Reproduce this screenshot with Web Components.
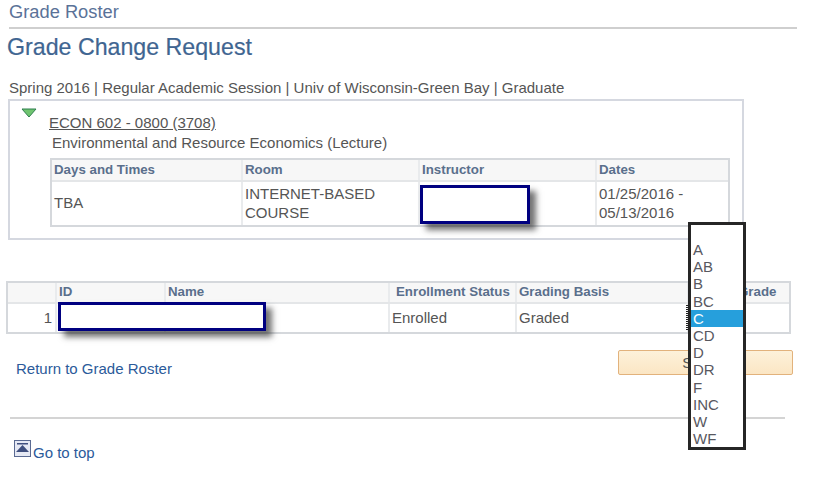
<template id="grade-grid">
    <style>
        :host {
            display: block;
            position: relative;
            border: 2px solid #d5d8dc;
            box-sizing: border-box;
            background: #fff;
            color: #555;
        }

        .row {
            display: grid;
            grid-template-columns: var(--cols);
        }

        .head {
            height: var(--head-h, 20px);
            background: #f7f7f7;
            border-bottom: 2px solid #e4e6e8;
            color: #5a6f8c;
            font-weight: bold;
            font-size: 13.3px;
        }

        .body {
            height: var(--body-h, 43px);
            font-size: 15px;
            line-height: 19px;
        }

        ::slotted(span) {
            display: flex;
            align-items: center;
            padding: 0 0 2px 2px;
            border-left: 2px solid #e9ebed;
            white-space: pre-line;
            box-sizing: border-box;
            overflow: hidden;
        }

        ::slotted(.lead) {
            border-left: 0;
        }
    </style>
    <div class="row head"><slot name="head"></slot></div>
    <div class="row body"><slot name="body"></slot></div>
    <slot name="over"></slot>
</template>

<template id="redact-box">
    <style>
        :host {
            display: block;
            position: absolute;
            box-sizing: border-box;
            background: #fff;
            border: 3px solid #000080;
            box-shadow: 6px 6px 6px rgba(40, 40, 40, 0.65);
        }
    </style>
</template>

<template id="grade-menu">
    <style>
        :host {
            display: block;
            position: absolute;
            left: 688px;
            top: 222px;
            width: 58px;
            height: 228px;
            box-sizing: border-box;
            border: 3px solid #262626;
            background: #fff;
            padding-top: 16px;
            color: #58585f;
            font-size: 15px;
            z-index: 5;
        }

        :host::before {
            content: "";
            position: absolute;
            left: -5px;
            top: 80px;
            width: 2px;
            height: 25px;
            background: repeating-linear-gradient(#222 0 1px, transparent 1px 2px);
        }

        ::slotted(div) {
            height: 17.2px;
            line-height: 17.2px;
            padding-left: 2px;
        }

        ::slotted(.on) {
            background: #269fdc;
            color: #fff;
        }
    </style>
    <slot></slot>
</template>

<template id="top-icon">
    <style>
        :host {
            display: inline-block;
            width: 18px;
            height: 18px;
        }

        svg {
            display: block;
        }
    </style>
    <svg width="18" height="18" viewBox="0 0 18 18">
        <rect x="0.5" y="0.5" width="16" height="16" fill="#e6e9f4" stroke="#5a6a92"></rect>
        <rect x="3" y="3" width="11" height="1.5" fill="#3f4f7f"></rect>
        <path d="M8.5 5 L15 12 H2 Z" fill="#3f4f7f"></path>
    </svg>
</template>

<template id="grade-page">
    <style>
        :host {
            display: block;
            position: relative;
            width: 819px;
            height: 496px;
            overflow: hidden;
            background: #fff;
            font-family: "Liberation Sans", Arial, sans-serif;
            color: #555;
        }

        .crumb {
            margin-left: 9px;
            padding-top: 3px;
            height: 29px;
            width: 788px;
            box-sizing: border-box;
            border-bottom: 2px solid #cfcfcf;
            color: #5a7298;
            font-size: 18.3px;
            line-height: 18px;
        }

        h1 {
            margin: 4px 0 0 7px;
            height: 28px;
            font-size: 23.2px;
            line-height: 28px;
            font-weight: normal;
            color: #3f6591;
            -webkit-text-stroke: 0.2px #3f6591;
        }

        .term {
            margin: 19px 0 0 9px;
            font-size: 15px;
            line-height: 16px;
            height: 16px;
        }

        .panel {
            margin: 3px 0 0 8px;
            width: 736px;
            height: 141px;
            box-sizing: border-box;
            border: 2px solid #d5d8e0;
            position: relative;
            padding: 7px 0 0 11px;
            display: flex;
            gap: 12px;
        }

        .arrow {
            flex: none;
        }

        .info {
            flex: 1;
            padding-top: 6px;
        }

        .course {
            font-size: 15px;
            line-height: 18px;
            text-decoration: underline;
        }

        .title {
            margin: 2px 0 6px 3px;
            font-size: 15px;
            line-height: 18px;
        }

        .meeting {
            --cols: 189px 177px 177px 1fr;
            width: 680px;
            margin-left: 1px;
        }

        .students {
            --cols: 47px 109px 224px 127px 172px 1fr;
            --head-h: 19px;
            --body-h: 28px;
            margin: 41px 0 0 6px;
            width: 785px;
        }

        .bottom {
            display: flex;
            justify-content: space-between;
            margin: 16px 26px 0 16px;
            height: 25px;
        }

        a {
            color: #2b5a9a;
            font-size: 15px;
            text-decoration: none;
        }

        .back {
            padding-top: 11px;
            line-height: 16px;
        }

        .save {
            width: 175px;
            height: 25px;
            box-sizing: border-box;
            border: 1px solid #e2b27c;
            border-radius: 2px;
            background: linear-gradient(#fdf1da, #fbe6c4);
            font: 15px "Liberation Sans", Arial, sans-serif;
            color: #555;
            padding: 0;
        }

        hr {
            margin: 42px 0 0 10px;
            width: 775px;
            height: 2px;
            border: 0;
            background: #d4d4d4;
        }

        .top {
            display: flex;
            align-items: flex-start;
            margin: 21px 0 0 14px;
            gap: 1px;
        }

        .top a {
            line-height: 16px;
            margin-top: 5px;
        }

        .count {
            justify-content: flex-end;
            padding-right: 3px;
        }
    </style>
    <div class="crumb">Grade Roster</div>
    <h1>Grade Change Request</h1>
    <div class="term">Spring 2016 | Regular Academic Session | Univ of Wisconsin-Green Bay | Graduate</div>
    <div class="panel">
        <svg class="arrow" width="16" height="10" viewBox="0 0 16 10">
            <path d="M1 1 H15 L8 9 Z" fill="#6fc46f" stroke="#2f7f4f"></path>
        </svg>
        <div class="info">
            <div class="course">ECON 602 - 0800 (3708)</div>
            <div class="title">Environmental and Resource Economics (Lecture)</div>
            <grade-grid class="meeting">
                <span slot="head" class="lead">Days and Times</span>
                <span slot="head">Room</span>
                <span slot="head">Instructor</span>
                <span slot="head">Dates</span>
                <span slot="body" class="lead">TBA</span>
                <span slot="body">INTERNET-BASED
COURSE</span>
                <span slot="body"></span>
                <span slot="body">01/25/2016 -
05/13/2016</span>
                <redact-box slot="over" style="left: 368px; top: 25px; width: 110px; height: 39px"></redact-box>
            </grade-grid>
        </div>
    </div>
    <grade-grid class="students">
        <span slot="head" class="lead"></span>
        <span slot="head">ID</span>
        <span slot="head">Name</span>
        <span slot="head" style="padding-left: 6px">Enrollment Status</span>
        <span slot="head">Grading Basis</span>
        <span slot="head" style="padding-left: 49px">Grade</span>
        <span slot="body" class="lead count">1</span>
        <span slot="body"></span>
        <span slot="body"></span>
        <span slot="body">Enrolled</span>
        <span slot="body">Graded</span>
        <span slot="body"></span>
        <redact-box slot="over" style="left: 50px; top: 19px; width: 208px; height: 29px"></redact-box>
    </grade-grid>
    <div class="bottom">
        <a class="back" href="#">Return to Grade Roster</a>
        <button class="save">Submit</button>
    </div>
    <hr>
    <div class="top">
        <top-icon></top-icon>
        <a href="#">Go to top</a>
    </div>
    <grade-menu>
        <div>A</div>
        <div>AB</div>
        <div>B</div>
        <div>BC</div>
        <div class="on">C</div>
        <div>CD</div>
        <div>D</div>
        <div>DR</div>
        <div>F</div>
        <div>INC</div>
        <div>W</div>
        <div>WF</div>
    </grade-menu>
</template>

<style>
    html, body {
        margin: 0;
        background: #fff;
    }
</style>

<grade-page></grade-page>

<script>
    function fromTemplate(id) {
        return class extends HTMLElement {
            constructor() {
                super();
                const shadow = this.attachShadow({ mode: 'open' });
                shadow.appendChild(document.querySelector(id).content.cloneNode(true));
            }
        };
    }

    customElements.define('grade-grid', fromTemplate('#grade-grid'));
    customElements.define('redact-box', fromTemplate('#redact-box'));
    customElements.define('grade-menu', fromTemplate('#grade-menu'));
    customElements.define('top-icon', fromTemplate('#top-icon'));
    customElements.define('grade-page', fromTemplate('#grade-page'));
</script>
